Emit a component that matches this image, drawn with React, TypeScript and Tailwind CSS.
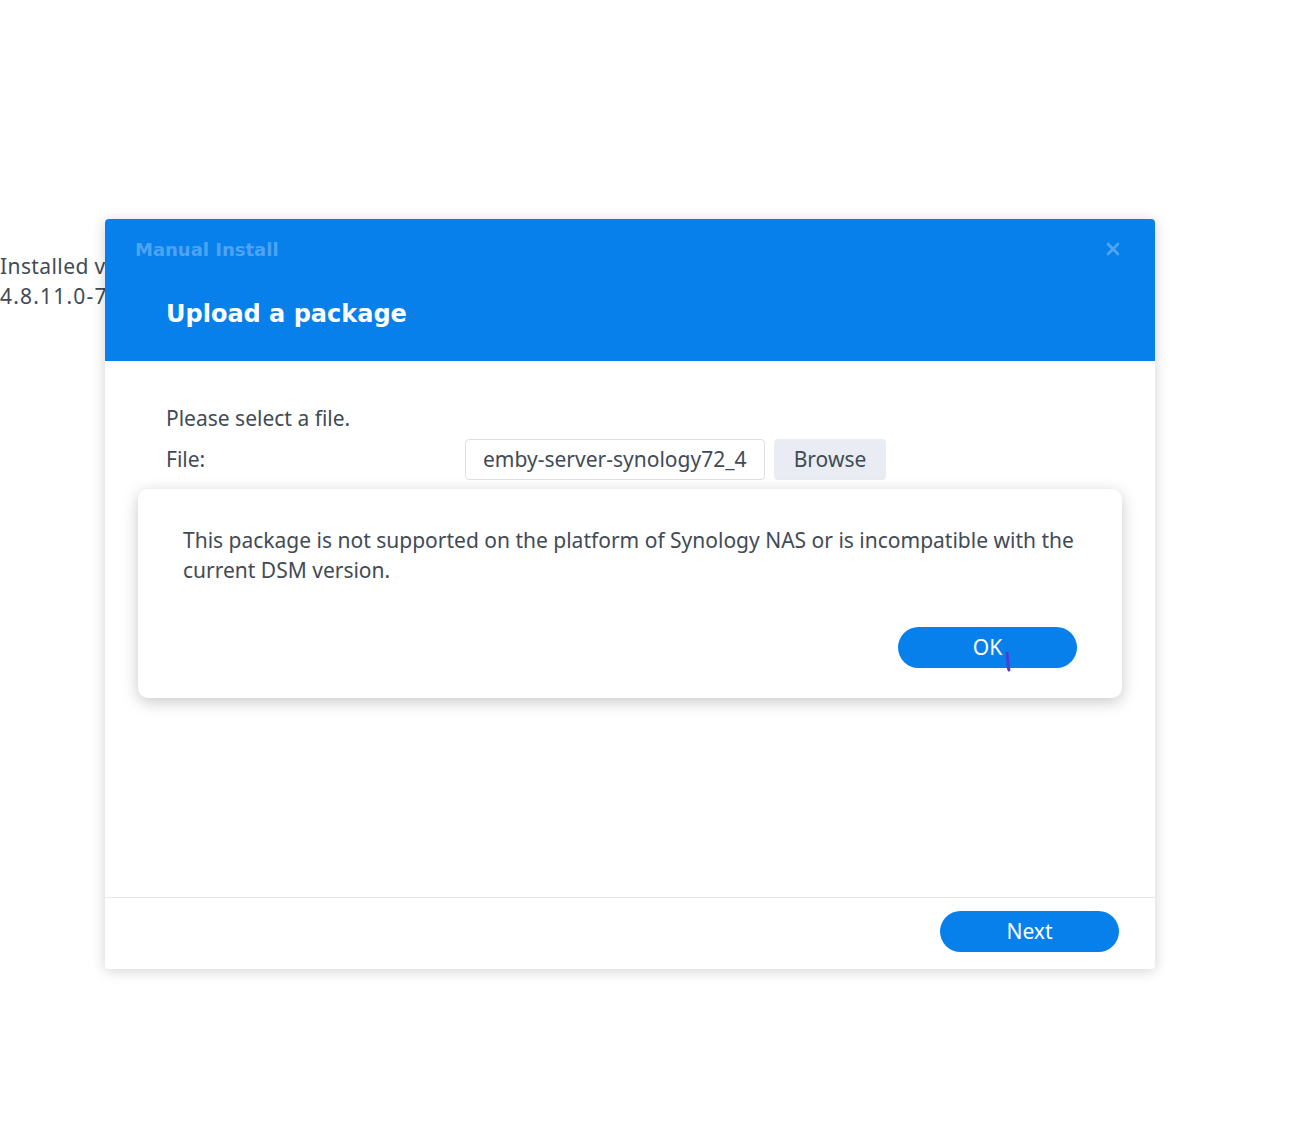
import React from "react";

export default function App() {
  const font = { fontFamily: '"Noto Sans", "Open Sans", sans-serif' };
  const titleFont = { fontFamily: '"DejaVu Sans", Verdana, sans-serif' };
  return (
    <div className="relative w-[1310px] h-[1137px] bg-white overflow-hidden text-[#414b55]" style={font}>
      <div className="absolute left-0 top-[251px] text-[21px] leading-[30px] tracking-[0.4px] text-[#414b55]">
        <div>Installed version:</div>
        <div className="tracking-[1.2px]">4.8.11.0-7</div>
      </div>

      <div className="absolute left-[105px] top-[219px] w-[1050px] h-[750px] bg-white rounded-[4px] shadow-[0_2px_14px_rgba(0,0,0,0.18)] flex flex-col">
        <div className="h-[142px] bg-[#0780ec] rounded-t-[4px] relative shrink-0">
          <div className="absolute left-[30px] top-[17px] text-[18px] font-bold text-white/30" style={titleFont}>
            Manual Install
          </div>
          <svg className="absolute left-[1001px] top-[23px]" width="14" height="14" viewBox="0 0 14 14">
            <path d="M2 2 L12 12 M12 2 L2 12" stroke="rgba(255,255,255,0.3)" strokeWidth="2.6" strokeLinecap="round" />
          </svg>
          <div className="absolute left-[61px] top-[77px] text-[24px] font-bold text-white leading-[36px]" style={titleFont}>
            Upload a package
          </div>
        </div>

        <div className="flex-1 px-[61px] pt-[43px]">
          <div className="text-[21px] leading-[28px]">Please select a file.</div>
          <div className="flex items-center mt-[7px] h-[41px]">
            <div className="w-[299px] text-[21px]">File:</div>
            <div className="w-[300px] h-[41px] border border-[#dde1e6] rounded-[4px] px-[17px] flex items-center">
              <div className="overflow-hidden whitespace-nowrap text-[21px] w-full">emby-server-synology72_4.8.11.0</div>
            </div>
            <div className="ml-[9px] w-[112px] h-[41px] bg-[#e9edf3] rounded-[4px] flex items-center justify-center text-[21px]">
              Browse
            </div>
          </div>
        </div>

        <div className="h-[72px] border-t border-[#e5e8ec] flex items-start justify-end pr-[36px] pt-[13px] shrink-0">
          <div className="w-[179px] h-[41px] rounded-full bg-[#0780ec] text-white text-[21px] flex items-center justify-center">
            Next
          </div>
        </div>
      </div>

      <div className="absolute left-[138px] top-[489px] w-[984px] h-[209px] bg-white rounded-[10px] shadow-[0_4px_16px_rgba(0,0,0,0.22)] px-[45px] pt-[36px] flex flex-col">
        <div className="text-[21px] leading-[30px]">
          This package is not supported on the platform of Synology NAS or is incompatible with the current DSM version.
        </div>
        <div className="flex justify-end mt-[42px]">
          <div className="relative w-[179px] h-[41px] rounded-full bg-[#0780ec] text-white text-[21px] flex items-center justify-center">
            OK
            <svg className="absolute left-[106px] top-[24px]" width="8" height="22" viewBox="0 0 8 22">
              <path d="M3 2 Q4 9 4 14 Q4 17 5 19" stroke="#4a3fd0" strokeWidth="3" fill="none" strokeLinecap="round" />
            </svg>
          </div>
        </div>
      </div>
    </div>
  );
}
